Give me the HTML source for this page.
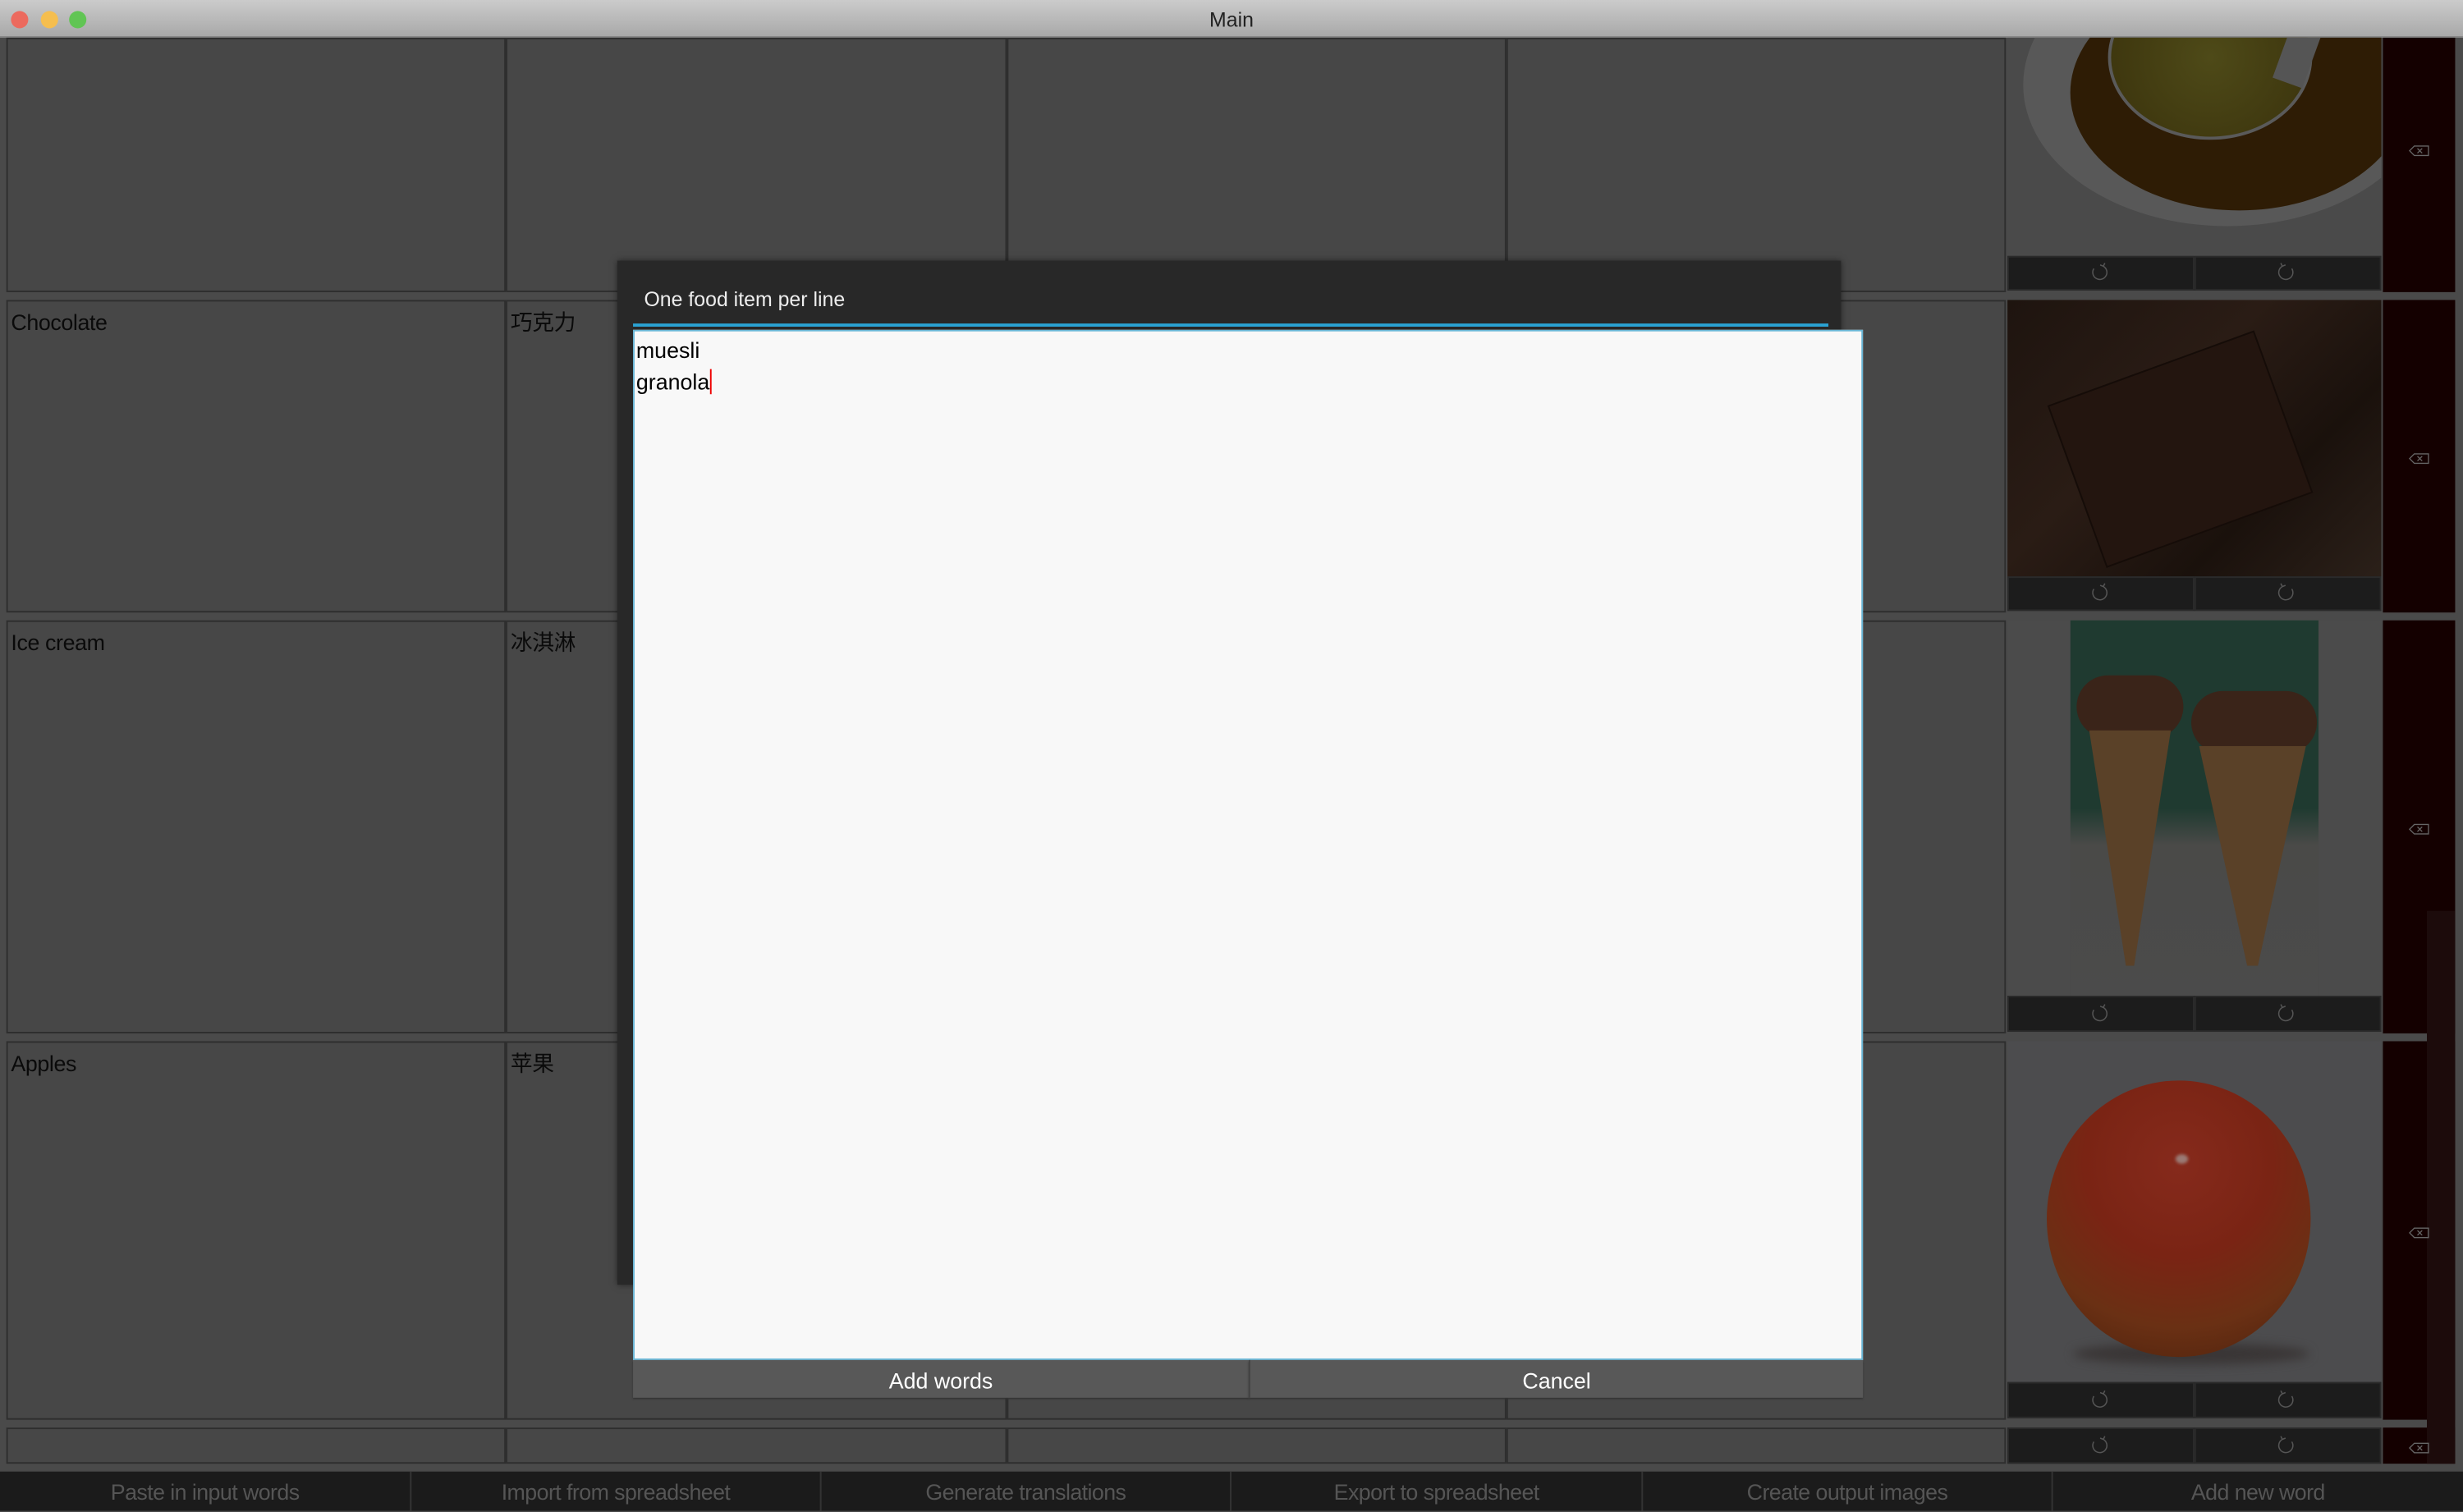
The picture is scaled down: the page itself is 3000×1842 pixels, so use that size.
<!DOCTYPE html>
<html><head><meta charset="utf-8"><style>
*{margin:0;padding:0;box-sizing:border-box}
html,body{width:3000px;height:1840px;overflow:hidden;background:#4a4a4a}
#w{position:absolute;left:0;top:0;width:1568px;height:962px;transform:scale(1.91327);transform-origin:0 0;font-family:"Liberation Sans","Noto Sans CJK SC",sans-serif;background:#4a4a4a}
.a{position:absolute}
.c{position:absolute;background:#474747;border:1px solid #2e2e2e;color:#0a0a0a;font-size:14px;padding:4px 2px;letter-spacing:-0.2px}
.btns{position:absolute;background:#1c1c1c;border:1px solid #2a2a2a}
.del{position:absolute;background:#140000}
.bb{position:absolute;top:937px;height:25px;background:#1b1b1b;border-left:1px solid #333;color:#555;font-size:14px;text-align:center;line-height:26px;letter-spacing:-0.3px}
</style></head><body><div id="w">
<div class="a" style="left:0;top:0;width:1568px;height:24px;background:linear-gradient(#cbcbcb,#a9a9a9);border-bottom:1px solid #888;text-align:center;font-size:13px;line-height:26px;color:#222">Main</div>
<div class="a" style="left:7px;top:7px;width:11px;height:11px;border-radius:50%;background:#ec6a5e"></div>
<div class="a" style="left:26px;top:7px;width:11px;height:11px;border-radius:50%;background:#f5be4f"></div>
<div class="a" style="left:44px;top:7px;width:11px;height:11px;border-radius:50%;background:#61c554"></div>

<div class="c" style="left:4px;top:24px;width:318px;height:162px"></div>
<div class="c" style="left:322px;top:24px;width:319px;height:162px"></div>
<div class="c" style="left:641px;top:24px;width:318px;height:162px"></div>
<div class="c" style="left:959px;top:24px;width:318px;height:162px"></div>

<div class="c" style="left:4px;top:191px;width:318px;height:199px;padding-top:5px">Chocolate</div>
<div class="c" style="left:322px;top:191px;width:319px;height:199px;padding-top:3px">巧克力</div>
<div class="c" style="left:641px;top:191px;width:318px;height:199px"></div>
<div class="c" style="left:959px;top:191px;width:318px;height:199px"></div>

<div class="c" style="left:4px;top:395px;width:318px;height:263px;padding-top:5px">Ice cream</div>
<div class="c" style="left:322px;top:395px;width:319px;height:263px;padding-top:3px">冰淇淋</div>
<div class="c" style="left:641px;top:395px;width:318px;height:263px"></div>
<div class="c" style="left:959px;top:395px;width:318px;height:263px"></div>

<div class="c" style="left:4px;top:663px;width:318px;height:241px;padding-top:5px">Apples</div>
<div class="c" style="left:322px;top:663px;width:319px;height:241px;padding-top:3px">苹果</div>
<div class="c" style="left:641px;top:663px;width:318px;height:241px"></div>
<div class="c" style="left:959px;top:663px;width:318px;height:241px"></div>

<div class="c" style="left:4px;top:909px;width:318px;height:23px"></div>
<div class="c" style="left:322px;top:909px;width:319px;height:23px"></div>
<div class="c" style="left:641px;top:909px;width:318px;height:23px"></div>
<div class="c" style="left:959px;top:909px;width:318px;height:23px"></div>

<!-- honey -->
<div class="a" style="left:1278px;top:24px;width:238px;height:139px;background:#4a4a4a;overflow:hidden">
 <div class="a" style="left:10px;top:-60px;width:260px;height:180px;border-radius:50%;background:#585858"></div>
 <div class="a" style="left:40px;top:-40px;width:215px;height:150px;border-radius:50%;background:#2e1c05"></div>
 <div class="a" style="left:64px;top:-40px;width:130px;height:105px;border-radius:50%;background:radial-gradient(circle at 50% 50%,#4e4a18,#3a320c);border:2px solid #5a5a5a"></div>
 <div class="a" style="left:175px;top:-10px;width:20px;height:40px;background:#555;transform:rotate(20deg)"></div>
</div>
<div class="a" style="left:1278px;top:191px;width:238px;height:176px;background:linear-gradient(135deg,#1e140f,#2a1c15 40%,#1a110c 70%,#2b2019);overflow:hidden">
 <div class="a" style="left:40px;top:40px;width:140px;height:110px;background:#23150f;transform:rotate(-20deg);border:1px solid #150c08"></div>
</div>
<div class="a" style="left:1318px;top:395px;width:158px;height:239px;background:linear-gradient(#1f3a30 0,#1f3a30 50%,#4a4a48 60%,#4b4b4b)"></div>
<div class="a" style="left:1278px;top:395px;width:40px;height:239px;background:#4b4b4b"></div>
<div class="a" style="left:1476px;top:395px;width:40px;height:239px;background:#4b4b4b"></div>
<div class="a" style="left:1322px;top:430px;width:68px;height:40px;border-radius:30px;background:#3a2419"></div>
<div class="a" style="left:1395px;top:440px;width:80px;height:40px;border-radius:30px;background:#3a2419"></div>
<div class="a" style="left:1330px;top:465px;width:52px;height:150px;background:#5a4128;clip-path:polygon(0 0,100% 0,55% 100%,45% 100%)"></div>
<div class="a" style="left:1400px;top:475px;width:68px;height:140px;background:#5a4128;clip-path:polygon(0 0,100% 0,55% 100%,45% 100%)"></div>
<div class="a" style="left:1278px;top:663px;width:238px;height:217px;background:#4c4c4e"></div>
<div class="a" style="left:1320px;top:855px;width:150px;height:14px;border-radius:50%;background:#3a3636;filter:blur(3px)"></div>
<div class="a" style="left:1303px;top:688px;width:168px;height:176px;border-radius:50%;background:radial-gradient(circle at 50% 30%,#862a1c 0,#7a2414 40%,#6a3014 70%,#4a200c 100%)"></div>
<div class="a" style="left:1385px;top:735px;width:8px;height:6px;border-radius:50%;background:#9a7a74;filter:blur(1px)"></div>

<div class="btns" style="left:1278px;top:163px;width:119px;height:22px"></div><div class="btns" style="left:1397px;top:163px;width:119px;height:22px"></div>
<div class="btns" style="left:1278px;top:367px;width:119px;height:22px"></div><div class="btns" style="left:1397px;top:367px;width:119px;height:22px"></div>
<div class="btns" style="left:1278px;top:634px;width:119px;height:23px"></div><div class="btns" style="left:1397px;top:634px;width:119px;height:23px"></div>
<div class="btns" style="left:1278px;top:880px;width:119px;height:23px"></div><div class="btns" style="left:1397px;top:880px;width:119px;height:23px"></div>
<div class="btns" style="left:1278px;top:909px;width:119px;height:23px"></div><div class="btns" style="left:1397px;top:909px;width:119px;height:23px"></div>
<svg class="a" style="left:0;top:0" width="1568" height="962" fill="none" stroke="#555" stroke-width="0.8">
<g id="r"><path d="M1333 171a4.5 4.5 0 1 0 6 -1.5M1339 169.5l1 -2M1339 169.5l-2 -0.8"/></g>
<use href="#r" y="204"/><use href="#r" y="472"/><use href="#r" y="718"/><use href="#r" y="747"/>
<g id="s"><path d="M1459 171a4.5 4.5 0 1 1 -6 -1.5M1453 169.5l-1 -2M1453 169.5l2 -0.8"/></g>
<use href="#s" y="204"/><use href="#s" y="472"/><use href="#s" y="718"/><use href="#s" y="747"/>
</svg>

<div class="del" style="left:1517px;top:24px;width:46px;height:162px"></div>
<div class="del" style="left:1517px;top:191px;width:46px;height:199px"></div>
<div class="del" style="left:1517px;top:395px;width:46px;height:263px"></div>
<div class="del" style="left:1517px;top:663px;width:46px;height:241px"></div>
<div class="del" style="left:1517px;top:909px;width:46px;height:23px"></div>
<div class="a" style="left:1545px;top:580px;width:18px;height:352px;background:#1c0b0b"></div>
<svg class="a" style="left:0;top:0" width="1568" height="962" fill="none" stroke="#666" stroke-width="0.7">
<g id="d"><path d="M1534 96l3 -3h9v6h-9z M1539 94.5l3 3M1542 94.5l-3 3"/></g>
<use href="#d" y="196"/><use href="#d" y="432"/><use href="#d" y="689"/><use href="#d" y="826"/>
</svg>

<div class="bb" style="left:0;width:261px;border-left:none">Paste in input words</div>
<div class="bb" style="left:261px;width:261px">Import from spreadsheet</div>
<div class="bb" style="left:522px;width:261px">Generate translations</div>
<div class="bb" style="left:783px;width:262px">Export to spreadsheet</div>
<div class="bb" style="left:1045px;width:261px">Create output images</div>
<div class="bb" style="left:1306px;width:262px">Add new word</div>

<div class="a" style="left:393px;top:166px;width:779px;height:652px;background:#282828;box-shadow:0 0 4px rgba(0,0,0,.5)"></div>
<div class="a" style="left:410px;top:183px;color:#eee;font-size:13px">One food item per line</div>
<div class="a" style="left:403px;top:206px;width:761px;height:2px;background:#2aa3d4"></div>
<div class="a" style="left:403px;top:210px;width:783px;height:656px;background:#f8f8f8;border:1px solid #69b6d6;font-size:14px;line-height:20px;color:#000;padding:2px 1px">muesli<br>granola<span style="display:inline-block;width:1px;height:16px;background:#e00;vertical-align:-3px"></span></div>
<div class="a" style="left:403px;top:866px;width:392px;height:24px;background:#585858;color:#fff;font-size:14px;text-align:center;line-height:26px;box-shadow:0 1px 1px #333">Add words</div>
<div class="a" style="left:795px;top:866px;width:391px;height:24px;background:#585858;border-left:1px solid #444;color:#fff;font-size:14px;text-align:center;line-height:26px;box-shadow:0 1px 1px #333">Cancel</div>
</div></body></html>
